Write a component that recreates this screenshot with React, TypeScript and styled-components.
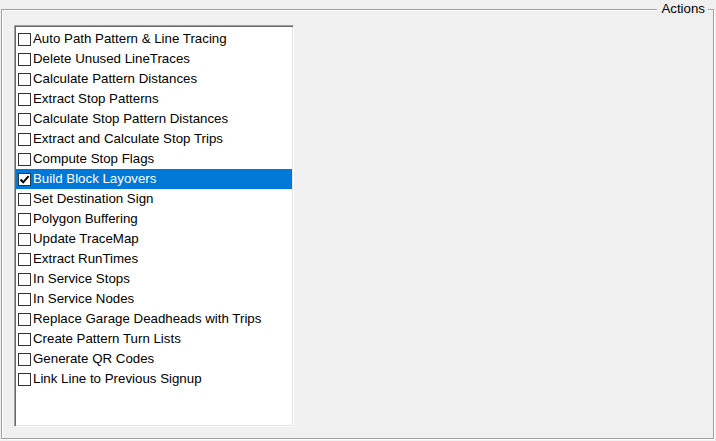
import React from "react";
import styled, { createGlobalStyle } from "styled-components";

const Global = createGlobalStyle`
  html, body { margin: 0; padding: 0; background: #f0f0f0; }
  body { font-family: "Liberation Sans", Arial, sans-serif; font-size: 13.3px; color: #000; }
  #root { width: 716px; height: 441px; overflow: hidden; }
`;

const GroupBox = styled.div`
  position: relative;
  box-sizing: border-box;
  margin: 9px 0 0 1px;
  width: 713px;
  height: 430px;
  border: 1px solid #a0a0a0;
  box-shadow: inset 1px 1px 0 #fff, 1px 1px 0 #fff;
  padding: 15px 0 0 12px;
`;

const Legend = styled.div`
  position: absolute;
  top: -9px;
  right: 5px;
  line-height: 16px;
  padding: 0 3px 0 4px;
  background: #f0f0f0;
`;

const ListBox = styled.div`
  box-sizing: border-box;
  width: 280px;
  height: 402px;
  background: #fff;
  border-style: solid;
  border-width: 1px;
  border-color: #a0a0a0 #fff #fff #a0a0a0;
  box-shadow: inset 1px 1px 0 #696969, inset -1px -1px 0 #e3e3e3;
  padding: 3px 1px 1px 1px;
`;

const Row = styled.div<{ $selected?: boolean }>`
  height: 20px;
  display: flex;
  align-items: center;
  gap: 2px;
  padding-left: 2px;
  background: ${(p) => (p.$selected ? "#0078d7" : "transparent")};
  color: ${(p) => (p.$selected ? "#fff" : "#000")};
  white-space: nowrap;
`;

const Box = styled.span`
  box-sizing: border-box;
  width: 13px;
  height: 13px;
  flex: 0 0 13px;
  border: 1px solid #333;
  background: #fff;
  display: flex;
  align-items: center;
  justify-content: center;
`;

const Label = styled.span`
  line-height: 20px;
`;

const items = [
  "Auto Path Pattern & Line Tracing",
  "Delete Unused LineTraces",
  "Calculate Pattern Distances",
  "Extract Stop Patterns",
  "Calculate Stop Pattern Distances",
  "Extract and Calculate Stop Trips",
  "Compute Stop Flags",
  "Build Block Layovers",
  "Set Destination Sign",
  "Polygon Buffering",
  "Update TraceMap",
  "Extract RunTimes",
  "In Service Stops",
  "In Service Nodes",
  "Replace Garage Deadheads with Trips",
  "Create Pattern Turn Lists",
  "Generate QR Codes",
  "Link Line to Previous Signup",
];

const Check = () => (
  <svg width="11" height="11" viewBox="0 0 11 11">
    <path d="M1.5 5.5 L4.2 8.3 L9.6 2.2" fill="none" stroke="#000" strokeWidth="2" />
  </svg>
);

export default function App() {
  return (
    <>
      <Global />
      <GroupBox>
        <Legend>Actions</Legend>
        <ListBox>
          {items.map((t, i) => (
            <Row key={t} $selected={i === 7}>
              <Box>{i === 7 && <Check />}</Box>
              <Label>{t}</Label>
            </Row>
          ))}
        </ListBox>
      </GroupBox>
    </>
  );
}
